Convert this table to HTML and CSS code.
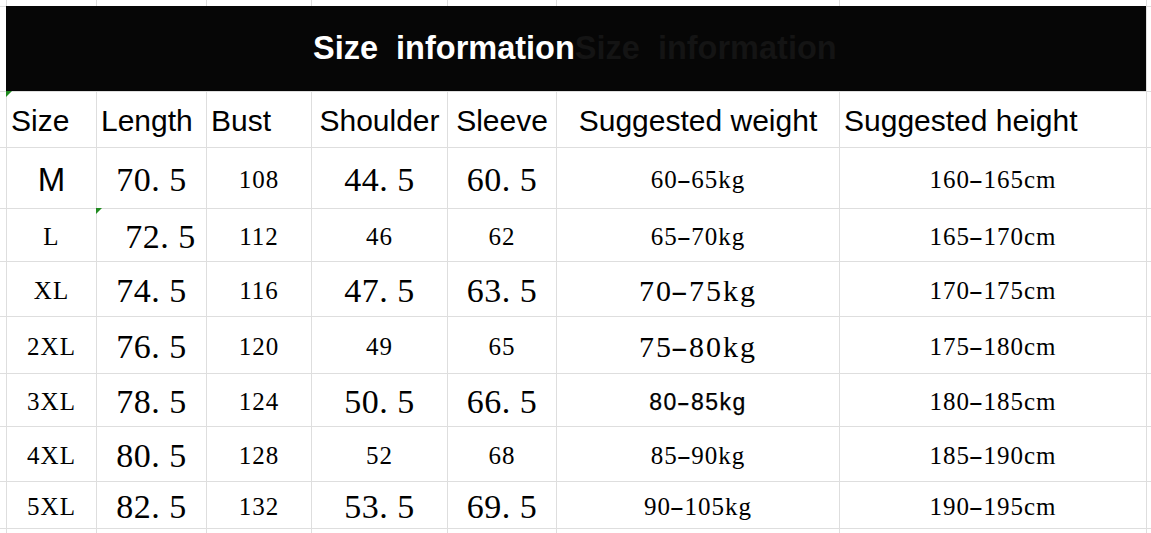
FILE: index.html
```html
<!DOCTYPE html>
<html>
<head>
<meta charset="utf-8">
<link rel="stylesheet" href="styles.css">
</head>
<body>
<div class="sheet">
  <div class="c"></div><div class="c"></div><div class="c"></div><div class="c"></div><div class="c"></div><div class="c"></div><div class="c"></div><div class="c"></div><div class="c"></div>

  <div class="c"></div>
  <div class="title"><span class="t-main">Size&nbsp; information</span><span class="t-ghost">Size&nbsp; information</span></div>
  <div class="c"></div>

  <div class="c"></div>
  <div class="c h tri">Size</div>
  <div class="c h">Length</div>
  <div class="c h">Bust</div>
  <div class="c h hc">Shoulder</div>
  <div class="c h hc">Sleeve</div>
  <div class="c h hc">Suggested weight</div>
  <div class="c h">Suggested height</div>
  <div class="c"></div>

  <div class="c"></div>
  <div class="c d sans">M</div>
  <div class="c d lg">70. 5</div>
  <div class="c d">108</div>
  <div class="c d lg">44. 5</div>
  <div class="c d lg">60. 5</div>
  <div class="c d">60<span class="dash">-</span>65kg</div>
  <div class="c d">160<span class="dash">-</span>165cm</div>
  <div class="c"></div>

  <div class="c"></div>
  <div class="c d">L</div>
  <div class="c d lg shift tri">72. 5</div>
  <div class="c d">112</div>
  <div class="c d">46</div>
  <div class="c d">62</div>
  <div class="c d">65<span class="dash">-</span>70kg</div>
  <div class="c d">165<span class="dash">-</span>170cm</div>
  <div class="c"></div>

  <div class="c"></div>
  <div class="c d">XL</div>
  <div class="c d lg">74. 5</div>
  <div class="c d">116</div>
  <div class="c d lg">47. 5</div>
  <div class="c d lg">63. 5</div>
  <div class="c d md">70<span class="dash">-</span>75kg</div>
  <div class="c d">170<span class="dash">-</span>175cm</div>
  <div class="c"></div>

  <div class="c"></div>
  <div class="c d">2XL</div>
  <div class="c d lg">76. 5</div>
  <div class="c d">120</div>
  <div class="c d">49</div>
  <div class="c d">65</div>
  <div class="c d md">75<span class="dash">-</span>80kg</div>
  <div class="c d">175<span class="dash">-</span>180cm</div>
  <div class="c"></div>

  <div class="c"></div>
  <div class="c d">3XL</div>
  <div class="c d lg">78. 5</div>
  <div class="c d">124</div>
  <div class="c d lg">50. 5</div>
  <div class="c d lg">66. 5</div>
  <div class="c d odd">80<span class="dash">-</span>85kg</div>
  <div class="c d">180<span class="dash">-</span>185cm</div>
  <div class="c"></div>

  <div class="c"></div>
  <div class="c d">4XL</div>
  <div class="c d lg">80. 5</div>
  <div class="c d">128</div>
  <div class="c d">52</div>
  <div class="c d">68</div>
  <div class="c d">85<span class="dash">-</span>90kg</div>
  <div class="c d">185<span class="dash">-</span>190cm</div>
  <div class="c"></div>

  <div class="c"></div>
  <div class="c d">5XL</div>
  <div class="c d lg">82. 5</div>
  <div class="c d">132</div>
  <div class="c d lg">53. 5</div>
  <div class="c d lg">69. 5</div>
  <div class="c d">90<span class="dash">-</span>105kg</div>
  <div class="c d">190<span class="dash">-</span>195cm</div>
  <div class="c"></div>

  <div class="c"></div><div class="c"></div><div class="c"></div><div class="c"></div><div class="c"></div><div class="c"></div><div class="c"></div><div class="c"></div><div class="c"></div>
</div>
</body>
</html>
```
FILE: styles.css
```css
html, body {
  margin: 0;
  padding: 0;
  background: #fff;
  overflow: hidden;
}

.sheet {
  display: grid;
  grid-template-columns: 6px 89px 109px 104px 135px 108px 282px 306px 1fr;
  grid-template-rows: 6px 84px 55px 60px 52px 54px 56px 52px 54px 46px 1fr;
  gap: 1px;
  background: #dedede;
  height: 533px;
  width: 1151px;
}

.c {
  background: #fff;
  position: relative;
  display: flex;
  align-items: center;
  justify-content: center;
  white-space: nowrap;
  color: #000;
  min-width: 0;
  overflow: visible;
}

.title {
  grid-column: 2 / 9;
  margin: -1px 0 0 -1px;
  background: #060606;
  display: flex;
  align-items: center;
  padding-left: 307px;
  font-family: "Liberation Sans", Arial, sans-serif;
  font-weight: bold;
  font-size: 32.5px;
  white-space: nowrap;
}

.t-main { color: #fff; }
.t-ghost { color: #141414; }

.h {
  font-family: "Liberation Sans", Arial, sans-serif;
  font-size: 30px;
  justify-content: flex-start;
  padding-left: 4px;
  padding-top: 2px;
}

.h.hc {
  justify-content: center;
  padding-left: 0;
}

.d {
  font-family: "Liberation Serif", "Times New Roman", serif;
  font-size: 25px;
  letter-spacing: 1px;
  padding-top: 4px;
}

.d.lg {
  font-size: 34px;
  letter-spacing: 0.5px;
}

.d.md {
  font-size: 30px;
  letter-spacing: 2px;
}

.d.sans {
  font-family: "Liberation Sans", Arial, sans-serif;
  font-size: 33px;
  letter-spacing: 0;
}

.d.odd {
  font-family: "Liberation Sans", Arial, sans-serif;
  font-size: 23px;
  letter-spacing: 1.5px;
  -webkit-text-stroke: 0.25px #000;
}

.dash {
  display: inline-block;
  transform: scaleX(1.7);
  margin: 0 2px;
}

.d.shift {
  padding-left: 18px;
}

.tri::before {
  content: "";
  position: absolute;
  left: -1px;
  top: -1px;
  width: 0;
  height: 0;
  border-top: 6px solid #1f8a1f;
  border-right: 6px solid transparent;
}
```
